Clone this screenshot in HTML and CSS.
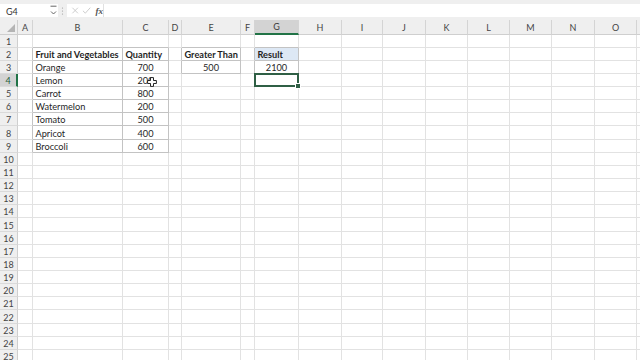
FILE: index.html
```html
<!DOCTYPE html>
<html>
<head>
<meta charset="utf-8">
<link rel="stylesheet" href="styles.css">
</head>
<body>
<div class="app">
  <div class="fbar">
    <div class="namebox">G4</div>
    <div class="nb-drop">
      <svg width="7" height="12" viewBox="0 0 7 12"><path d="M0.5 1.2h6" stroke="#666" stroke-width="1"/><path d="M1 6.5l2.5 2.5 2.5-2.5" fill="none" stroke="#555" stroke-width="0.9"/></svg>
    </div>
    <div class="sep">
      <svg width="3" height="10" viewBox="0 0 3 10"><circle cx="1.5" cy="2" r="0.6" fill="#999"/><circle cx="1.5" cy="5" r="0.6" fill="#999"/><circle cx="1.5" cy="8" r="0.6" fill="#999"/></svg>
    </div>
    <div class="fx-icons">
      <svg width="9" height="9" viewBox="0 0 9 9"><path d="M1.5 1.5l6 6M7.5 1.5l-6 6" stroke="#c2c2c2" stroke-width="0.9"/></svg>
      <svg width="10" height="9" viewBox="0 0 10 9"><path d="M1 4.8l2.6 2.6 5.4-6" fill="none" stroke="#c2c2c2" stroke-width="0.9"/></svg>
      <span class="fx">fx</span>
    </div>
    <div class="finput"></div>
  </div>

  <div class="sheet">
    <div class="corner"><svg width="8" height="8" viewBox="0 0 8 8"><path d="M8 0V8H0Z" fill="#b4b4b4"/></svg></div>
    <div class="ch">A</div><div class="ch">B</div><div class="ch">C</div><div class="ch">D</div><div class="ch">E</div><div class="ch">F</div><div class="ch sel">G</div><div class="ch">H</div><div class="ch">I</div><div class="ch">J</div><div class="ch">K</div><div class="ch">L</div><div class="ch">M</div><div class="ch">N</div><div class="ch">O</div><div class="ch last"></div>

    <div class="rh">1</div><div></div><div class="db"></div><div class="db"></div><div></div><div class="db"></div><div></div><div class="db"></div><div></div><div></div><div></div><div></div><div></div><div></div><div></div><div></div><div></div>

    <div class="rh">2</div><div class="dr"></div><div class="bd hd">Fruit and Vegetables</div><div class="bd hd">Quantity</div><div class="dr"></div><div class="bd hd">Greater Than</div><div class="dr"></div><div class="bd hd blue">Result</div><div></div><div></div><div></div><div></div><div></div><div></div><div></div><div></div><div></div>

    <div class="rh">3</div><div class="dr"></div><div class="bd">Orange</div><div class="bd num">700</div><div class="dr"></div><div class="bd num">500</div><div class="dr"></div><div class="bd num">2100</div><div></div><div></div><div></div><div></div><div></div><div></div><div></div><div></div><div></div>

    <div class="rh sel">4</div><div class="dr"></div><div class="bd">Lemon</div><div class="bd num cur">200<svg class="cursor" width="10" height="10" viewBox="0 0 10 10"><path d="M3.5 0.6h3v2.9h2.9v3h-2.9v2.9h-3v-2.9h-2.9v-3h2.9z" fill="#fff" stroke="#111" stroke-width="0.9"/></svg></div><div></div><div></div><div></div><div class="active"></div><div></div><div></div><div></div><div></div><div></div><div></div><div></div><div></div><div></div>

    <div class="rh">5</div><div class="dr"></div><div class="bd">Carrot</div><div class="bd num">800</div><div></div><div></div><div></div><div></div><div></div><div></div><div></div><div></div><div></div><div></div><div></div><div></div><div></div>

    <div class="rh">6</div><div class="dr"></div><div class="bd">Watermelon</div><div class="bd num">200</div><div></div><div></div><div></div><div></div><div></div><div></div><div></div><div></div><div></div><div></div><div></div><div></div><div></div>

    <div class="rh">7</div><div class="dr"></div><div class="bd">Tomato</div><div class="bd num">500</div><div></div><div></div><div></div><div></div><div></div><div></div><div></div><div></div><div></div><div></div><div></div><div></div><div></div>

    <div class="rh">8</div><div class="dr"></div><div class="bd">Apricot</div><div class="bd num">400</div><div></div><div></div><div></div><div></div><div></div><div></div><div></div><div></div><div></div><div></div><div></div><div></div><div></div>

    <div class="rh">9</div><div class="dr"></div><div class="bd">Broccoli</div><div class="bd num">600</div><div></div><div></div><div></div><div></div><div></div><div></div><div></div><div></div><div></div><div></div><div></div><div></div><div></div>

    <div class="rh">10</div><div></div><div></div><div></div><div></div><div></div><div></div><div></div><div></div><div></div><div></div><div></div><div></div><div></div><div></div><div></div><div></div>
    <div class="rh">11</div><div></div><div></div><div></div><div></div><div></div><div></div><div></div><div></div><div></div><div></div><div></div><div></div><div></div><div></div><div></div><div></div>
    <div class="rh">12</div><div></div><div></div><div></div><div></div><div></div><div></div><div></div><div></div><div></div><div></div><div></div><div></div><div></div><div></div><div></div><div></div>
    <div class="rh">13</div><div></div><div></div><div></div><div></div><div></div><div></div><div></div><div></div><div></div><div></div><div></div><div></div><div></div><div></div><div></div><div></div>
    <div class="rh">14</div><div></div><div></div><div></div><div></div><div></div><div></div><div></div><div></div><div></div><div></div><div></div><div></div><div></div><div></div><div></div><div></div>
    <div class="rh">15</div><div></div><div></div><div></div><div></div><div></div><div></div><div></div><div></div><div></div><div></div><div></div><div></div><div></div><div></div><div></div><div></div>
    <div class="rh">16</div><div></div><div></div><div></div><div></div><div></div><div></div><div></div><div></div><div></div><div></div><div></div><div></div><div></div><div></div><div></div><div></div>
    <div class="rh">17</div><div></div><div></div><div></div><div></div><div></div><div></div><div></div><div></div><div></div><div></div><div></div><div></div><div></div><div></div><div></div><div></div>
    <div class="rh">18</div><div></div><div></div><div></div><div></div><div></div><div></div><div></div><div></div><div></div><div></div><div></div><div></div><div></div><div></div><div></div><div></div>
    <div class="rh">19</div><div></div><div></div><div></div><div></div><div></div><div></div><div></div><div></div><div></div><div></div><div></div><div></div><div></div><div></div><div></div><div></div>
    <div class="rh">20</div><div></div><div></div><div></div><div></div><div></div><div></div><div></div><div></div><div></div><div></div><div></div><div></div><div></div><div></div><div></div><div></div>
    <div class="rh">21</div><div></div><div></div><div></div><div></div><div></div><div></div><div></div><div></div><div></div><div></div><div></div><div></div><div></div><div></div><div></div><div></div>
    <div class="rh">22</div><div></div><div></div><div></div><div></div><div></div><div></div><div></div><div></div><div></div><div></div><div></div><div></div><div></div><div></div><div></div><div></div>
    <div class="rh">23</div><div></div><div></div><div></div><div></div><div></div><div></div><div></div><div></div><div></div><div></div><div></div><div></div><div></div><div></div><div></div><div></div>
    <div class="rh">24</div><div></div><div></div><div></div><div></div><div></div><div></div><div></div><div></div><div></div><div></div><div></div><div></div><div></div><div></div><div></div><div></div>
    <div class="rh">25</div><div></div><div></div><div></div><div></div><div></div><div></div><div></div><div></div><div></div><div></div><div></div><div></div><div></div><div></div><div></div><div></div>
  </div>
</div>
</body>
</html>
```

FILE: styles.css
```css
* { box-sizing: border-box; }
html, body { margin: 0; padding: 0; }
body {
  width: 640px;
  height: 360px;
  overflow: hidden;
  background: #ffffff;
  font-family: Lato, "Liberation Sans", sans-serif;
  color: #1f1f1f;
}
.app { display: flex; flex-direction: column; height: 360px; }

.fbar {
  height: 20px;
  background: #efefef;
  padding: 4px 0 3px 0;
  display: flex;
  align-items: stretch;
  flex: none;
}
.namebox {
  width: 49px;
  background: #fff;
  font-size: 9px;
  color: #333;
  padding-left: 6px;
  padding-top: 1px;
  display: flex;
  align-items: center;
}
.nb-drop {
  width: 9px;
  background: #fff;
  display: flex;
  align-items: center;
  justify-content: center;
}
.sep {
  width: 9px;
  display: flex;
  align-items: center;
  justify-content: center;
}
.fx-icons {
  width: 37px;
  background: #fff;
  display: flex;
  align-items: center;
  gap: 3px;
  padding-left: 4px;
  border-right: 1px solid #e0e0e0;
}
.fx {
  font-family: "Liberation Serif", serif;
  font-style: italic;
  font-weight: bold;
  font-size: 9px;
  color: #555;
  margin-left: 1px;
}
.finput { flex: 1; background: #fff; }

.sheet {
  flex: 1;
  display: grid;
  grid-template-columns: 18px 15px 90px 46px 13px 59px 14px 44px 43px 41px 43px 42px 42px 42px 43px 42px 1fr;
  grid-template-rows: 14.5px;
  grid-auto-rows: 13.15px;
  font-size: 9.2px;
  overflow: hidden;
}
.sheet > div {
  border-right: 1px solid #e2e2e2;
  border-bottom: 1px solid #e2e2e2;
  display: flex;
  align-items: center;
  padding: 1px 2.5px 0 2.5px;
  white-space: nowrap;
  overflow: visible;
  min-width: 0;
}
.sheet > .corner {
  background: #efefef;
  border-right: 1px solid #cfcfcf;
  border-bottom: 1px solid #cfcfcf;
  align-items: flex-end;
  justify-content: flex-end;
  padding: 0 2px 2px 0;
}
.sheet > .ch {
  background: #efefef;
  border-right: 1px solid #d4d4d4;
  border-bottom: 1px solid #cfcfcf;
  justify-content: center;
  color: #444;
  font-size: 9px;
}
.sheet > .ch.last { border-right: none; }
.sheet > .ch.sel {
  background: #d3d3d3;
  border-bottom: 2px solid #217346;
  color: #3a3a3a;
}
.sheet > .rh {
  background: #efefef;
  border-right: 1px solid #cfcfcf;
  border-bottom: 1px solid #dadada;
  justify-content: center;
  color: #444;
  font-size: 9px;
  padding: 1px 0 0 0;
}
.sheet > .rh.sel {
  background: #d3d3d3;
  border-right: 2px solid #217346;
  color: #1e5e3a;
}
.sheet > .bd {
  border-right-color: #c3c3c3;
  border-bottom-color: #c3c3c3;
}
.sheet > .db { border-bottom-color: #c3c3c3; }
.sheet > .dr { border-right-color: #c3c3c3; }
.sheet > .hd { font-weight: bold; }
.sheet > .blue { background: #dde8f5; }
.sheet > .num { justify-content: center; }
.sheet > .cur { position: relative; }
.cursor {
  position: absolute;
  left: 24px;
  top: 3px;
}
.sheet > .active { position: relative; }
.active::after {
  content: "";
  position: absolute;
  left: -1px;
  top: -1px;
  right: -1px;
  bottom: -1px;
  border: 2px solid #2f5f45;
}
.active::before {
  content: "";
  position: absolute;
  right: -3px;
  bottom: -3px;
  width: 4px;
  height: 4px;
  background: #2f5f45;
  border: 1px solid #fff;
  z-index: 2;
}
```
